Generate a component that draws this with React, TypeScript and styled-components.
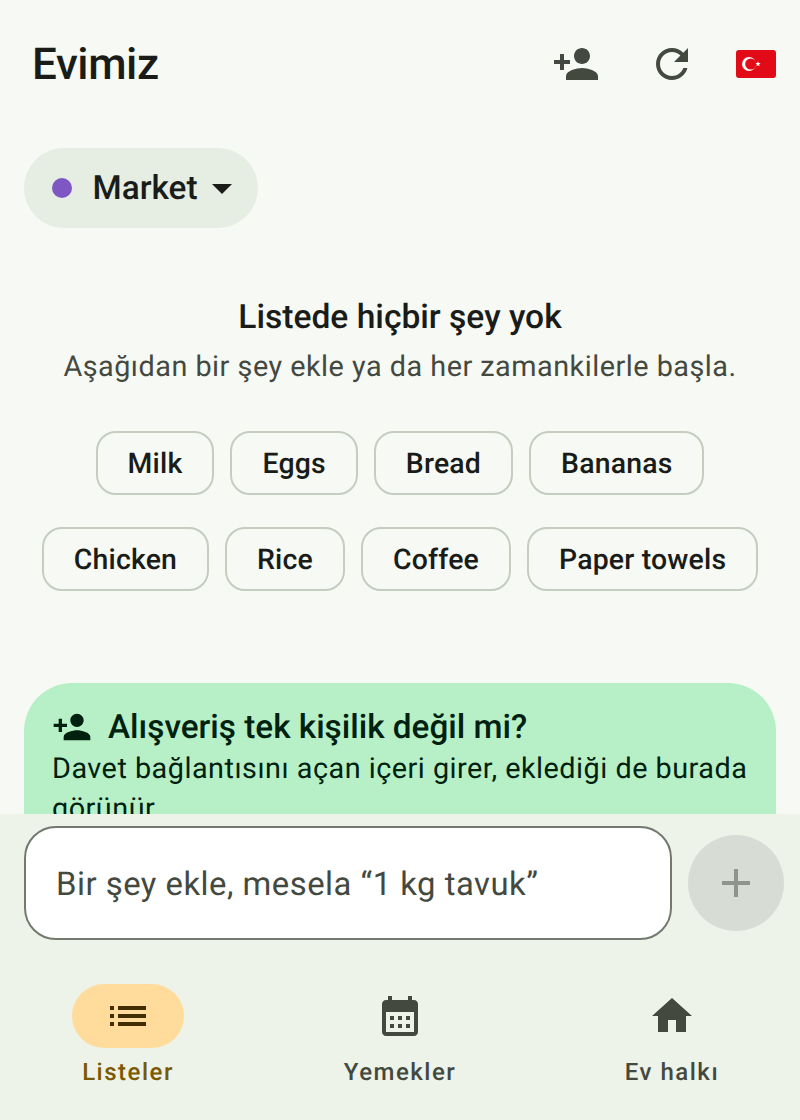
import React from "react";
import styled, { createGlobalStyle } from "styled-components";

const Global = createGlobalStyle`
  html, body { margin: 0; padding: 0; background: #f7f9f4; }
  * { box-sizing: border-box; }
  body {
    font-family: Roboto, "Noto Sans", sans-serif;
    -webkit-font-smoothing: antialiased;
    text-rendering: geometricPrecision;
  }
  button { text-rendering: geometricPrecision; }
`;

const Screen = styled.div`
  width: 800px;
  height: 1120px;
  display: flex;
  flex-direction: column;
  overflow: hidden;
  background: #f7f9f4;
  color: #191c18;
`;
const Main = styled.main`
  height: 814px;
  flex: none;
  overflow: hidden;
`;
const Header = styled.header`
  height: 128px;
  display: flex;
  align-items: center;
  padding: 0 8px 0 32px;
`;
const Title = styled.h1`
  flex: 1;
  margin: 0;
  font-size: 44px;
  line-height: 56px;
  font-weight: 500;
  letter-spacing: -0.4px;
  color: #191c18;
`;
const IconButton = styled.button`
  width: 96px;
  height: 96px;
  display: flex;
  align-items: center;
  justify-content: center;
  padding: 0;
  border: 0;
  background: none;
  color: #444940;
`;
const FlagButton = styled(IconButton)`
  width: 72px;
`;
const Selector = styled.button`
  margin: 20px 0 0 24px;
  height: 80px;
  display: inline-flex;
  align-items: center;
  padding: 0 12px 0 28px;
  border: 0;
  border-radius: 40px;
  background: #e6ede3;
  color: #191c18;
  font: 500 33.4px/48px Roboto, sans-serif;
`;
const Dot = styled.span`
  width: 20px;
  height: 20px;
  border-radius: 50%;
  background: #7e57c2;
  margin-right: 20.5px;
`;
const SelectorText = styled.span`
  padding-top: 2px;
`;
const Empty = styled.section`
  display: flex;
  flex-direction: column;
  align-items: center;
  padding: 0 24px;
  margin-top: 66px;
`;
const EmptyTitle = styled.h2`
  margin: 0 0 5px;
  font-size: 33.6px;
  line-height: 48px;
  font-weight: 500;
  color: #191c18;
`;
const EmptyText = styled.p`
  margin: 0;
  font-size: 28.8px;
  line-height: 40px;
  color: #444940;
  letter-spacing: 0.5px;
`;
const Chips = styled.div`
  margin-top: 44px;
  display: flex;
  flex-wrap: wrap;
  justify-content: center;
  gap: 32px 16px;
`;
const Chip = styled.button`
  height: 64px;
  padding: 2px 30px 0;
  border: 2px solid #c4cdc0;
  border-radius: 20px;
  background: #f7f9f4;
  color: #191c18;
  font: 500 28.4px/40px Roboto, sans-serif;
  letter-spacing: 0.2px;
`;
const Card = styled.section`
  margin: 92px 24px 0;
  height: 240px;
  padding: 24px 28px;
  border-radius: 48px;
  background: #b7f0c6;
  color: #00210f;
`;
const CardHead = styled.div`
  height: 40px;
  display: flex;
  align-items: center;
  gap: 16px;
`;
const CardTitle = styled.h3`
  margin: 0;
  padding-top: 2px;
  font-size: 33.3px;
  line-height: 40px;
  font-weight: 500;
`;
const CardText = styled.p`
  margin: 2px 0 0;
  font-size: 28.8px;
  line-height: 40px;
  letter-spacing: 0.5px;
`;
const Bottom = styled.div`
  flex: 1;
  display: flex;
  flex-direction: column;
  background: #edf3e9;
`;
const Composer = styled.div`
  display: flex;
  align-items: center;
  gap: 16px;
  padding: 12px 16px 0 24px;
`;
const Field = styled.div`
  flex: 1;
  height: 114px;
  display: flex;
  align-items: center;
  padding: 3px 30px 0;
  background: #fff;
  border: 2px solid #74796f;
  border-radius: 32px;
  font-size: 32.85px;
  letter-spacing: 0.5px;
  color: #444940;
`;
const Send = styled.button`
  width: 96px;
  height: 96px;
  display: flex;
  align-items: center;
  justify-content: center;
  padding: 0;
  border: 0;
  border-radius: 50%;
  background: #d7dcd4;
  color: #8f948c;
`;
const Nav = styled.nav`
  display: flex;
  gap: 48px;
  padding: 44px 16px 0;
`;
const NavItem = styled.div`
  flex: 1;
  display: flex;
  flex-direction: column;
  align-items: center;
`;
const NavPill = styled.div<{ $active?: boolean }>`
  width: 112px;
  height: 64px;
  border-radius: 32px;
  display: flex;
  align-items: center;
  justify-content: center;
  background: ${(p) => (p.$active ? "#ffdc9c" : "transparent")};
  color: ${(p) => (p.$active ? "#412d00" : "#444940")};
`;
const NavLabel = styled.span<{ $active?: boolean }>`
  margin-top: 8px;
  font-size: 24px;
  line-height: 32px;
  font-weight: 500;
  letter-spacing: 1.5px;
  color: ${(p) => (p.$active ? "#7a5900" : "#444940")};
`;

const Icon = ({ d, size = 48 }: { d: string; size?: number }) => (
  <svg width={size} height={size} viewBox="0 0 24 24" fill="currentColor">
    <path d={d} />
  </svg>
);

const PERSON_ADD =
  "M15 12c2.21 0 4-1.79 4-4s-1.79-4-4-4-4 1.79-4 4 1.79 4 4 4zm-9-2V7H4v3H1v2h3v3h2v-3h3v-2H6zm9 4c-2.67 0-8 1.34-8 4v2h16v-2c0-2.66-5.33-4-8-4z";
const REFRESH =
  "M17.65 6.35C16.2 4.9 14.21 4 12 4c-4.42 0-7.99 3.58-7.99 8s3.57 8 7.99 8c3.73 0 6.84-2.55 7.73-6h-2.08c-.82 2.33-3.04 4-5.65 4-3.31 0-6-2.69-6-6s2.69-6 6-6c1.66 0 3.14.69 4.22 1.78L13 11h7V4l-2.35 2.35z";
const DROP = "M7 10l5 5 5-5z";
const ADD = "M19 13h-6v6h-2v-6H5v-2h6V5h2v6h6v2z";
const LIST =
  "M3 13h2v-2H3v2zm0 4h2v-2H3v2zm0-8h2V7H3v2zm4 4h14v-2H7v2zm0 4h14v-2H7v2zM7 7v2h14V7H7z";
const CALENDAR =
  "M19 4h-1V2h-2v2H8V2H6v2H5c-1.1 0-2 .9-2 2v14c0 1.1.9 2 2 2h14c1.1 0 2-.9 2-2V6c0-1.1-.9-2-2-2zm0 16H5V10h14v10zM9 14H7v-2h2v2zm4 0h-2v-2h2v2zm4 0h-2v-2h2v2zm-8 4H7v-2h2v2zm4 0h-2v-2h2v2zm4 0h-2v-2h2v2z";
const HOME = "M10 20v-6h4v6h5v-8h3L12 3 2 12h3v8z";

const Flag = () => (
  <svg width="40" height="28" viewBox="0 0 40 28">
    <rect width="40" height="28" rx="3" fill="#e30a17" />
    <circle cx="13" cy="14" r="7" fill="#fff" />
    <circle cx="14.8" cy="14" r="5.6" fill="#e30a17" />
    <polygon
      points="22,11.3 22.7,13.1 24.6,13.2 23.1,14.4 23.6,16.2 22,15.2 20.4,16.2 20.9,14.4 19.4,13.2 21.3,13.1"
      fill="#fff"
    />
  </svg>
);

const row = ["Milk", "Eggs", "Bread", "Bananas", "Chicken", "Rice", "Coffee", "Paper towels"];

export default function App() {
  return (
    <Screen>
      <Global />
      <Main>
        <Header>
          <Title>Evimiz</Title>
          <IconButton aria-label="Davet et"><Icon d={PERSON_ADD} /></IconButton>
          <IconButton aria-label="Yenile"><Icon d={REFRESH} /></IconButton>
          <FlagButton aria-label="Dil"><Flag /></FlagButton>
        </Header>
        <Selector>
          <Dot />
          <SelectorText>Market</SelectorText>
          <Icon d={DROP} />
        </Selector>
        <Empty>
          <EmptyTitle>Listede hiçbir şey yok</EmptyTitle>
          <EmptyText>Aşağıdan bir şey ekle ya da her zamankilerle başla.</EmptyText>
          <Chips>
            {row.map((c) => (
              <Chip key={c}>{c}</Chip>
            ))}
          </Chips>
        </Empty>
        <Card>
          <CardHead>
            <Icon d={PERSON_ADD} size={40} />
            <CardTitle>Alışveriş tek kişilik değil mi?</CardTitle>
          </CardHead>
          <CardText>Davet bağlantısını açan içeri girer, eklediği de burada görünür.</CardText>
        </Card>
      </Main>
      <Bottom>
        <Composer>
          <Field>Bir şey ekle, mesela “1 kg tavuk”</Field>
          <Send aria-label="Ekle"><Icon d={ADD} /></Send>
        </Composer>
        <Nav>
          <NavItem>
            <NavPill $active><Icon d={LIST} /></NavPill>
            <NavLabel $active>Listeler</NavLabel>
          </NavItem>
          <NavItem>
            <NavPill><Icon d={CALENDAR} /></NavPill>
            <NavLabel>Yemekler</NavLabel>
          </NavItem>
          <NavItem>
            <NavPill><Icon d={HOME} /></NavPill>
            <NavLabel>Ev halkı</NavLabel>
          </NavItem>
        </Nav>
      </Bottom>
    </Screen>
  );
}
